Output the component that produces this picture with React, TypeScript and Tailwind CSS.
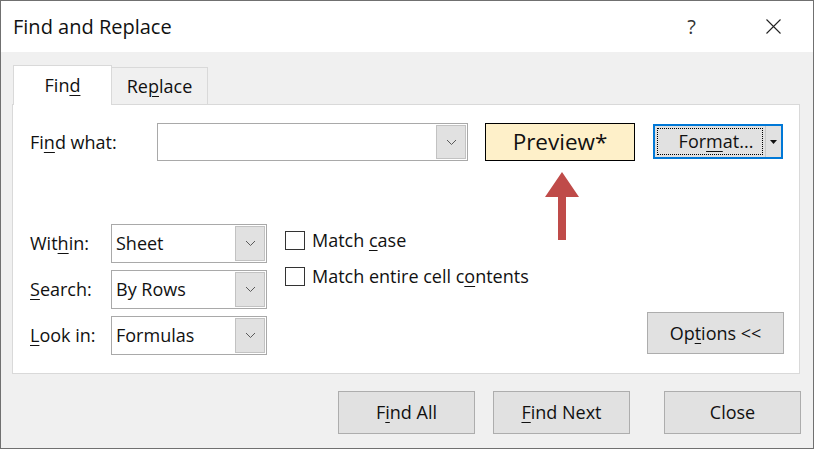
import type { ReactNode } from 'react'

const FONT = { fontFamily: '"Open Sans", "Noto Sans", sans-serif' }

const Key = ({ children }: { children: ReactNode }) => (
  <span className="underline decoration-1 underline-offset-[3px]">{children}</span>
)

const Chevron = () => (
  <svg width="11" height="7" viewBox="0 0 11 7" fill="none">
    <path d="M1 1 L5.5 5.5 L10 1" stroke="#5a5a5a" strokeWidth="1" />
  </svg>
)

const Combo = ({ value, className }: { value?: string; className: string }) => (
  <div className={`flex border border-[#a9a9a9] bg-white ${className}`}>
    <div className="flex flex-1 items-center pl-1 text-[18px] text-[#111]">{value}</div>
    <div className="m-px flex w-[30px] items-center justify-center border border-[#c2c2c2] bg-[#e1e1e1]">
      <Chevron />
    </div>
  </div>
)

const Check = ({ children }: { children: ReactNode }) => (
  <label className="flex h-[20px] items-center gap-[7px] text-[18px] text-[#111]">
    <span className="h-[19px] w-[20px] border border-[#333] bg-white" />
    <span>{children}</span>
  </label>
)

const Btn = ({ children, className = '' }: { children: ReactNode; className?: string }) => (
  <button
    className={`flex h-[43px] w-[137px] items-center justify-center border border-[#adadad] bg-[#e1e1e1] text-[18px] text-[#111] ${className}`}
  >
    {children}
  </button>
)

const Field = ({ label, value }: { label: ReactNode; value: string }) => (
  <div className="flex items-center">
    <span className="w-[81px] text-[18px] text-[#111]">{label}</span>
    <Combo value={value} className="h-[39px] w-[156px]" />
  </div>
)

export default function App() {
  return (
    <div
      style={FONT}
      className="flex h-[449px] w-[814px] flex-col border border-[#707070] bg-[#f0f0f0]"
    >
      {/* title bar */}
      <div className="flex h-[51px] items-center bg-white pl-3">
        <span className="flex-1 pt-px text-[20px] text-[#111]">Find and Replace</span>
        <span className="mr-[70px] text-[20px] text-[#333]">?</span>
        <svg width="15" height="15" viewBox="0 0 15 15" className="mr-[32px]">
          <path d="M0.5 0.5 L14.5 14.5 M14.5 0.5 L0.5 14.5" stroke="#222" strokeWidth="1.1" />
        </svg>
      </div>

      <div className="flex flex-1 flex-col pl-[11px] pr-[12px] pt-[13px]">
        {/* tabs */}
        <div className="flex items-end pl-px">
          <div className="relative z-10 -mb-px flex h-[40px] w-[99px] items-center justify-center border border-b-0 border-[#d9d9d9] bg-white text-[18px] text-[#111]">
            Fin<Key>d</Key>
          </div>
          <div className="flex h-[37px] w-[96px] items-center justify-center border border-b-0 border-l-0 border-[#d9d9d9] text-[18px] text-[#111]">
            Re<Key>p</Key>lace
          </div>
        </div>

        {/* panel */}
        <div className="mr-px flex flex-col border border-[#d9d9d9] bg-white pb-[18px] pl-[17px] pr-[15px] pt-[18px]">
          <div className="flex items-start">
            <span className="flex h-[38px] w-[127px] items-center text-[18px] text-[#111]">
              Fi<Key>n</Key>d what:
            </span>
            <Combo className="h-[38px] w-[311px]" />
            <div className="relative ml-[17px] flex h-[38px] w-[150px] items-center justify-center border-[1.5px] border-black bg-[#fef0c9]">
              <span className="text-[22.5px] text-[#111]">Preview*</span>
              <svg
                width="36"
                height="69"
                viewBox="0 0 36 69"
                className="absolute left-[58px] top-[48px]"
              >
                <polygon points="18,0 35,25 22,25 22,68 14,68 14,25 1,25" fill="#bf4b49" />
              </svg>
            </div>
            <div className="ml-[18px] mt-px flex h-[35px] w-[130px] border-2 border-[#0078d7] bg-[#e1e1e1]">
              <div className="m-[2px] flex flex-1 items-center justify-center border border-dotted border-black pl-3 text-[18px] text-[#111]">
                For<Key>m</Key>at...
              </div>
              <div className="flex w-[16px] items-center justify-center border-l border-[#c8c8c8]">
                <svg width="7" height="4" viewBox="0 0 7 4">
                  <polygon points="0,0 7,0 3.5,4" fill="#111" />
                </svg>
              </div>
            </div>
          </div>

          <div className="mt-[63px] flex">
            <div className="flex flex-col gap-[7px]">
              <Field
                label={
                  <>
                    Wit<Key>h</Key>in:
                  </>
                }
                value="Sheet"
              />
              <Field
                label={
                  <>
                    <Key>S</Key>earch:
                  </>
                }
                value="By Rows"
              />
              <Field
                label={
                  <>
                    <Key>L</Key>ook in:
                  </>
                }
                value="Formulas"
              />
            </div>
            <div className="ml-[18px] mt-[6px] flex flex-col gap-[16px]">
              <Check>
                Match <Key>c</Key>ase
              </Check>
              <Check>
                Match entire cell c<Key>o</Key>ntents
              </Check>
            </div>
            <div className="flex-1" />
            <Btn className="mb-px self-end !h-[42px]">
              Op<Key>t</Key>ions &lt;&lt;
            </Btn>
          </div>
        </div>

        {/* footer buttons */}
        <div className="mt-[17px] flex justify-end">
          <Btn>
            F<Key>i</Key>nd All
          </Btn>
          <Btn className="ml-[18px]">
            <Key>F</Key>ind Next
          </Btn>
          <Btn className="ml-[34px]">Close</Btn>
        </div>
      </div>
    </div>
  )
}
